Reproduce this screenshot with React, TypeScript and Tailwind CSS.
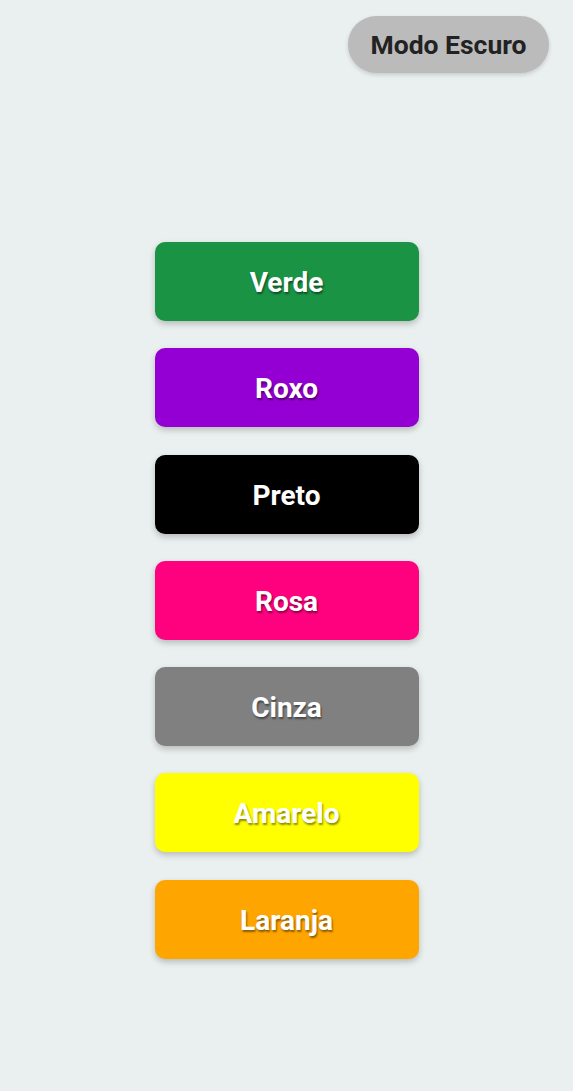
import React from "react";

const colors = [
  { name: "Verde", bg: "bg-[#1a9345]" },
  { name: "Roxo", bg: "bg-[#9400d3]" },
  { name: "Preto", bg: "bg-[#000000]" },
  { name: "Rosa", bg: "bg-[#ff007f]" },
  { name: "Cinza", bg: "bg-[#808080]" },
  { name: "Amarelo", bg: "bg-[#ffff00]" },
  { name: "Laranja", bg: "bg-[#ffa500]" },
];

export default function App() {
  return (
    <div
      className="min-h-[1091px] w-full bg-[#eaf0ef] flex flex-col"
      style={{ fontFamily: "Roboto, 'Liberation Sans', sans-serif" }}
    >
      <div className="flex justify-end pt-4 pr-6">
        <button className="h-[57px] w-[201px] rounded-full bg-[#bbbbbb] text-[#222222] text-[26.5px] font-bold pt-[1px] shadow-[0_2px_4px_rgba(0,0,0,0.15)]">
          Modo Escuro
        </button>
      </div>
      <div className="flex flex-col items-center gap-[27.3px] pt-[169px]">
        {colors.map((c) => (
          <button
            key={c.name}
            className={`h-[79px] w-[264px] rounded-[10px] ${c.bg} text-white text-[28px] font-bold pt-[3px] [text-shadow:1px_2px_2px_rgba(0,0,0,0.45)] shadow-[0_3px_6px_rgba(0,0,0,0.22)]`}
          >
            {c.name}
          </button>
        ))}
      </div>
    </div>
  );
}
